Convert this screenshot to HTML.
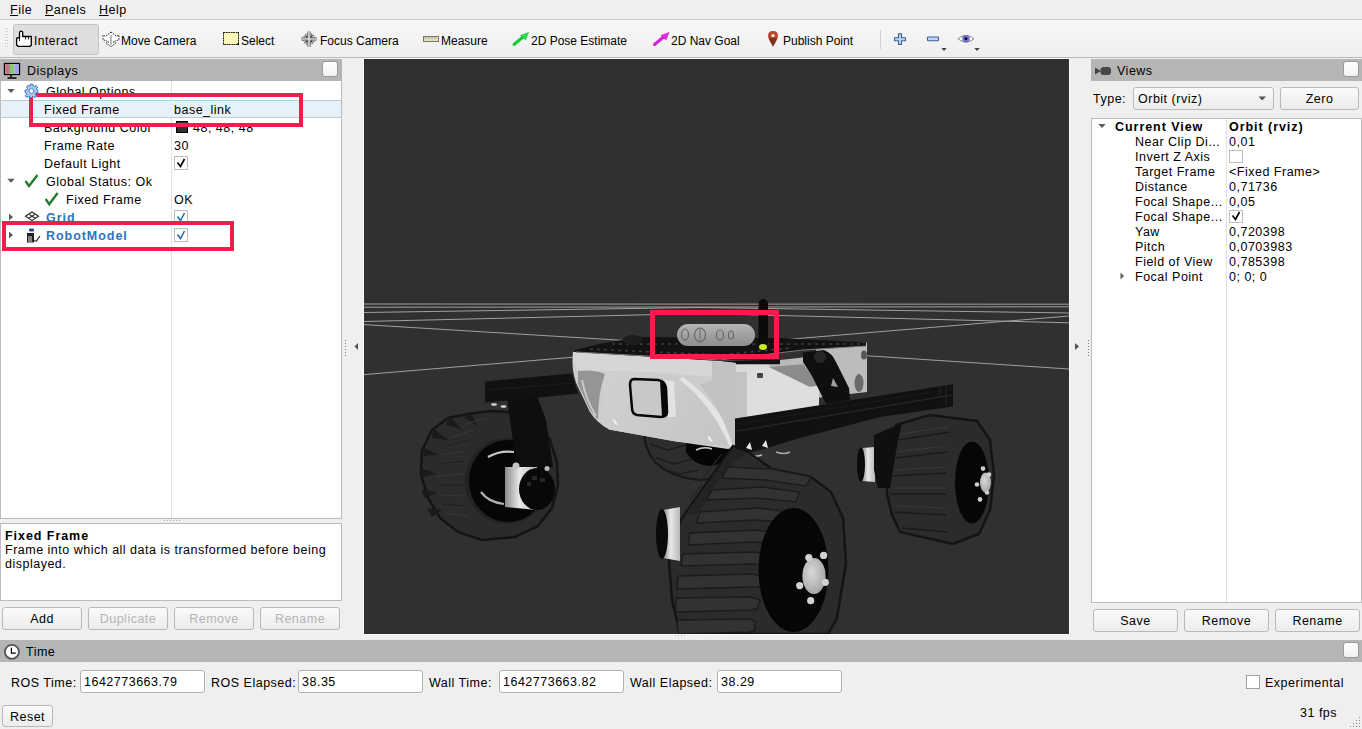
<!DOCTYPE html>
<html><head><meta charset="utf-8">
<style>
*{box-sizing:border-box;margin:0;padding:0}
html,body{width:1362px;height:729px;overflow:hidden;background:#efefef}
body{position:relative;font-family:"Liberation Sans",sans-serif;font-size:12.5px;letter-spacing:0.5px;color:#000}
.a{position:absolute}
.t{position:absolute;white-space:nowrap;line-height:15px;padding-top:1px}
.btn{position:absolute;border:1px solid #b9b9b9;border-radius:3px;background:linear-gradient(#fafafa,#ececec);text-align:center;line-height:21px;padding-top:1px}
.dis{color:#b4b4b4}
.hdr{position:absolute;background:#b5b5b5;height:22px}
.cb{position:absolute;width:16px;height:16px;border:1px solid #9a9a9a;border-radius:3px;background:linear-gradient(#ffffff,#f2f2f2)}
.tick{position:absolute;width:14px;height:14px;border:1px solid #bdbdbd;background:#fff}
.red{position:absolute;border:4.5px solid #f01e4a}
.inp{position:absolute;background:#fff;border:1px solid #b0b0b0;border-radius:3px;height:23px;line-height:22px;padding-left:3px}
b{font-weight:bold;letter-spacing:0.95px}
.tb{font-size:12px;letter-spacing:0}
</style></head><body>

<!-- menu bar -->
<div class="t" style="left:10px;top:2px"><u>F</u>ile</div>
<div class="t" style="left:45px;top:2px"><u>P</u>anels</div>
<div class="t" style="left:99px;top:2px"><u>H</u>elp</div>
<div class="a" style="left:0;top:19px;width:1362px;height:1px;background:#c9c9c9"></div>

<!-- toolbar -->
<div class="a" style="left:0;top:20px;width:1362px;height:37px;background:linear-gradient(#f7f7f7,#efefef)"></div>
<div class="a" style="left:0;top:57px;width:1362px;height:1px;background:#bababa"></div>
<div class="a" style="left:13px;top:24px;width:86px;height:31px;border:1px solid #c4c4c4;border-radius:3px;background:#dedede"></div>
<div class="t tb" style="left:34px;top:33px;letter-spacing:0.5px">Interact</div>
<div class="t tb" style="left:121px;top:33px">Move Camera</div>
<div class="a" style="left:223px;top:32px;width:16px;height:13px;border:1px dashed #222;background:#fafac0"></div>
<div class="t tb" style="left:241px;top:33px">Select</div>
<div class="t tb" style="left:320px;top:33px">Focus Camera</div>
<div class="a" style="left:423px;top:36px;width:16px;height:6px;border:1px solid #777;background:#e6e2b8"></div>
<div class="t tb" style="left:441px;top:33px">Measure</div>
<div class="t tb" style="left:531px;top:33px">2D Pose Estimate</div>
<div class="t tb" style="left:671px;top:33px">2D Nav Goal</div>
<div class="t tb" style="left:783px;top:33px">Publish Point</div>
<div class="a" style="left:880px;top:30px;width:1px;height:19px;background:#d0d0d0"></div>

<!-- Displays panel -->
<div class="hdr" style="left:0;top:59px;width:342px"></div>
<div class="t" style="left:27px;top:63px">Displays</div>
<div class="cb" style="left:322px;top:61px"></div>
<div class="a" style="left:0;top:81px;width:342px;height:438px;background:#fff;border:1px solid #bcbcbc;border-top:none"></div>
<div class="a" style="left:171px;top:81px;width:1px;height:437px;background:#e2e2e2"></div>
<div class="a" style="left:1px;top:100px;width:340px;height:18px;background:#e6f1fa;border-top:1px solid #b9cdd9;border-bottom:1px solid #b9cdd9"></div>

<div class="t" style="left:46px;top:84px">Global Options</div>
<div class="t" style="left:44px;top:102px">Fixed Frame</div>
<div class="t" style="left:174px;top:102px">base_link</div>
<div class="t" style="left:44px;top:120px">Background Color</div>
<div class="a" style="left:176px;top:121px;width:12px;height:12px;background:#303030;border:1px solid #000"></div>
<div class="t" style="left:193px;top:120px">48; 48; 48</div>
<div class="t" style="left:44px;top:138px">Frame Rate</div>
<div class="t" style="left:174px;top:138px">30</div>
<div class="t" style="left:44px;top:156px">Default Light</div>
<div class="tick" style="left:174px;top:156px"></div>
<div class="t" style="left:46px;top:174px">Global Status: Ok</div>
<div class="t" style="left:66px;top:192px">Fixed Frame</div>
<div class="t" style="left:174px;top:192px">OK</div>
<div class="t" style="left:46px;top:210px;color:#2f73bd"><b>Grid</b></div>
<div class="tick" style="left:174px;top:210px"></div>
<div class="t" style="left:46px;top:228px;color:#2f73bd"><b>RobotModel</b></div>
<div class="tick" style="left:174px;top:228px"></div>

<div class="red" style="left:29px;top:93px;width:274px;height:34px"></div>
<div class="red" style="left:2px;top:221px;width:232px;height:30px"></div>

<!-- description -->
<div class="a" style="left:0;top:523px;width:342px;height:78px;background:#fff;border:1px solid #bcbcbc"></div>
<div class="t" style="left:5px;top:528px"><b>Fixed Frame</b></div>
<div class="t" style="left:5px;top:542px">Frame into which all data is transformed before being</div>
<div class="t" style="left:5px;top:556px">displayed.</div>

<div class="btn" style="left:2px;top:607px;width:80px;height:23px">Add</div>
<div class="btn dis" style="left:88px;top:607px;width:80px;height:23px">Duplicate</div>
<div class="btn dis" style="left:174px;top:607px;width:80px;height:23px">Remove</div>
<div class="btn dis" style="left:260px;top:607px;width:80px;height:23px">Rename</div>

<!-- 3D view -->
<div class="a" style="left:363px;top:58px;width:707px;height:577px;background:#fbfbfb"></div>
<div class="a" style="left:364px;top:59px;width:705px;height:575px;background:#303030;overflow:hidden">
<svg id="scene" width="705" height="575" viewBox="364 59 705 575">
<defs>
<linearGradient id="mot" x1="0" y1="0" x2="1" y2="0"><stop offset="0" stop-color="#8a8a8a"/><stop offset="0.45" stop-color="#e8e8e8"/><stop offset="1" stop-color="#b8b8b8"/></linearGradient>
<linearGradient id="motv" x1="0" y1="0" x2="0" y2="1"><stop offset="0" stop-color="#9a9a9a"/><stop offset="0.45" stop-color="#e6e6e6"/><stop offset="1" stop-color="#a8a8a8"/></linearGradient>
<linearGradient id="face" x1="0" y1="0" x2="1" y2="0.3"><stop offset="0" stop-color="#d0d0d0"/><stop offset="1" stop-color="#c6c6c6"/></linearGradient>
<linearGradient id="cam" x1="0" y1="0" x2="0" y2="1"><stop offset="0" stop-color="#b5b5b5"/><stop offset="1" stop-color="#8d8d8d"/></linearGradient>
<radialGradient id="cap" cx="0.4" cy="0.4" r="0.7"><stop offset="0" stop-color="#d8d8d8"/><stop offset="1" stop-color="#a0a0a0"/></radialGradient>
</defs>
<g stroke="#a0a0a0" stroke-width="1" fill="none">
<path d="M364 304 L1069 304.2"/>
<path d="M364 307.2 L1069 306.8"/>
<path d="M364 312.5 L700 307.5 L1069 313"/>
<path d="M364 321.5 L700 313.5 L1069 322.8"/>
<path d="M364 324.6 L650 342"/>
<path d="M364 374.6 L1069 316"/>
<path d="M840 354 L1069 369"/>
</g>

<!-- rear center wheel (behind body) -->
<path d="M644 432 L700 430 L740 440 L738 470 Q725 478 700 480 Q672 478 655 462 Q644 448 644 432Z" fill="#2d2d2d" stroke="#161616" stroke-width="2"/>
<g stroke="#1c1c1c" stroke-width="1.4" fill="none"><path d="M650 444 l18 6 l22 -6 M656 458 l18 6 l22 -6 M666 470 l14 4 l18 -4"/></g>
<path d="M686 440 L735 442 Q730 462 712 466 Q694 466 686 452Z" fill="#050505"/>
<path d="M696 450 Q704 446 712 449" stroke="#d0d0d0" stroke-width="1.5" fill="none"/>
<!-- left rear wheel -->
<path d="M468 414 L490 411 L512 412 L535 420 L550 440 L557 462 L558 485 L552 508 L538 526 L515 537 L482 540 L458 532 L440 518 L428 498 L421 474 L422 450 L432 430 L448 418Z" fill="#2b2b2b" stroke="#141414" stroke-width="2.5"/>
<g fill="#1a1a1a">
<path d="M423 447 L438 455 L424 456Z"/><path d="M421 468 L437 474 L421 477Z"/><path d="M422 489 L438 493 L424 498Z"/><path d="M427 508 L442 510 L432 517Z"/><path d="M433 428 L448 440 L432 438Z"/><path d="M450 416 L462 430 L446 424Z"/><path d="M470 412 L478 426 L464 418Z"/>
</g>
<g stroke="#383838" stroke-width="1.2" fill="none"><path d="M440 455 l24 -4 M438 476 l26 -2 M440 495 l26 1 M446 513 l22 3 M450 438 l24 -8 M466 424 l20 -6"/></g>
<g stroke="#1f1f1f" stroke-width="1.2" fill="none"><path d="M438 464 l26 -3 M438 485 l26 0 M442 504 l24 2 M446 446 l24 -6"/></g>
<ellipse cx="507" cy="481" rx="42" ry="43" fill="#222"/>
<ellipse cx="508" cy="481" rx="39" ry="41" fill="#060606"/>
<path d="M488 457 Q500 450 514 452" stroke="#c9c9c9" stroke-width="2.2" fill="none"/>
<path d="M481 492 Q488 502 504 504" stroke="#b0b0b0" stroke-width="2.2" fill="none"/>
<!-- left leg -->
<path d="M507 398 L537 396 L546 420 L553 467 L517 470 L510 420Z" fill="#0e0e0e"/>
<!-- left motor -->
<path d="M505 467 L537 467 L537 510 L505 507Z" fill="url(#mot)"/>
<ellipse cx="537" cy="489" rx="18" ry="21" fill="#080808"/>
<g fill="#262626"><rect x="532" y="476" width="5" height="4"/><rect x="540" y="478" width="5" height="4"/><rect x="527" y="482" width="4" height="4"/></g>
<circle cx="516" cy="466" r="3.5" fill="#c4c4c4"/>
<circle cx="547" cy="468.5" r="2.5" fill="#bbbbbb"/>
<!-- left rail -->
<path d="M485 381.5 L572 373.4 L578 393.4 L537 397.7 L485 402.5Z" fill="#111"/>
<path d="M486 390 L575 383" stroke="#1c1c1c" stroke-width="1.2"/>
<g fill="#d8d8d8"><ellipse cx="494" cy="404.5" rx="3" ry="1.3"/><ellipse cx="503.5" cy="406.5" rx="3" ry="1.3"/></g>

<!-- right rear wheel -->
<path d="M896 425 L930 415 L977 421 L990 440 L994 475 L990 510 L979 534 L953 544 L900 532 L892 515 L887 494 L886 460Z" fill="#2b2b2b" stroke="#141414" stroke-width="2.5"/>
<g stroke="#1a1a1a" stroke-width="1.6" fill="none">
<path d="M898 440 l52 -8 M894 458 l54 -6 M890 476 l56 -3 M890 494 l56 0 M894 512 l52 3 M902 528 l46 4"/>
</g>
<g stroke="#3a3a3a" stroke-width="1.2" fill="none">
<path d="M900 434 l48 -7 M896 452 l50 -6 M892 470 l54 -3 M892 488 l54 0 M896 506 l50 2"/>
</g>
<ellipse cx="972" cy="482.5" rx="17" ry="41" fill="#060606"/>
<ellipse cx="985.5" cy="482.5" rx="5.5" ry="10" fill="url(#cap)"/>
<g fill="#cfcfcf"><circle cx="983" cy="468.6" r="2.3"/><circle cx="989" cy="474.6" r="2.3"/><circle cx="977" cy="484.5" r="2.3"/><circle cx="987" cy="492.5" r="2.3"/><circle cx="980" cy="499.4" r="2.3"/></g>
<!-- right motor & bracket -->
<path d="M862 448 L875 447 L875 482 L862 481Z" fill="url(#mot)"/>
<ellipse cx="861" cy="464.5" rx="4" ry="17" fill="#0a0a0a"/>
<path d="M874 435 L902 423 L898 440 L890 488 L878 488 L874 470Z" fill="#0f0f0f"/>

<!-- right side box -->
<path d="M816 344.5 L867 342.5 L867 392 L816 398Z" fill="#bcbcbc"/>
<ellipse cx="864" cy="355" rx="3" ry="4.5" fill="#585858"/>
<ellipse cx="859" cy="383" rx="4.5" ry="9" fill="#6a6a6a"/>

<!-- body side/white parts -->
<path d="M700 361 L780 360 L816 356 L820 396 L760 420 L735 432 L700 430Z" fill="#b9b9b9"/>
<path d="M700 360 L768 360 L770 372 L722 372 L700 372Z" fill="#d9d9d9"/>
<path d="M721 372 L747 372 L747 440 L721 440Z" fill="#c3c3c3"/>
<path d="M747 372 L769 367 L810 387 L819 385 L819 412 L747 428Z" fill="#dedede"/>
<path d="M769 367 L803 364.3 L820 385.5 L809.6 386.8Z" fill="#8c8c8c"/>
<path d="M700 360.4 L780 360 L780 364.3 L700 364.3Z" fill="#101010"/>
<rect x="757" y="373" width="6" height="5" rx="1" fill="#444"/>

<!-- body front -->
<path d="M573 352 L720 361 L721 372 L735 372 L737 447 L728 449 L676 441.6 L609 429.5 Q596 422 589.6 411.4 L576 382.7 Q571 368 573 352Z" fill="#cdcdcd"/>
<path d="M573 352 L720 361 L736 363 L736 378 L700 376 Q650 371 600 371 L578 371 Q572 362 573 352Z" fill="#d6d6d6"/>
<path d="M578 371 Q594 369 605 374 Q598 392 598 420 L590 410 L578 384Z" fill="#959595"/>
<path d="M582 380 Q586 400 596 416" stroke="#c8c8c8" stroke-width="2" fill="none"/>
<path d="M605 374 Q650 371 682 377 Q718 400 737 447 L676 441.6 L609 429.5 Q600 410 605 374Z" fill="url(#face)"/>
<path d="M682 377 Q718 400 737 447 L730 447 Q712 405 680 380Z" fill="#e4e4e4"/>
<path d="M712 361 L736 363 L736 447 L733 447 Q722 410 700 385 L712 380Z" fill="#c2c2c2"/>
<path d="M662 380 L674 381 L676 417 L664 417Z" fill="#e2e2e2"/>
<path d="M634 379 L658 380 Q665 381 666 388 L667 412 Q667 417 661 417 L637 415 Q632 414 632 408 L630 385 Q630 379 634 379Z" fill="#c8c8c8" stroke="#080808" stroke-width="2.5"/>
<path d="M660 381 L666 386 L668 414 L662 417Z" fill="#080808"/>
<path d="M612 419 l3 1 l3 5 l-3 -1Z" fill="#f2f2f2"/>
<path d="M707 436 l3 1 l3 5 l-3 -1Z" fill="#f2f2f2"/>
<!-- top plate -->
<path d="M575 350 L600 344 L622 340 L640 337 L780 338 L866 342.5 L866 346 L803 350 L720 361 L575 352Z" fill="#121212"/>
<path d="M576 352 L720 360 L803 350 L866 346" stroke="#7a7a7a" stroke-width="1" fill="none"/>
<g stroke="#3c3c3c" stroke-width="1.6" fill="none" stroke-dasharray="3 4">
<path d="M590 349 L720 355 L790 348"/>
<path d="M612 344 L740 344 L860 344"/>
</g>
<ellipse cx="633" cy="340" rx="10" ry="5" fill="#1d1d1d"/>
<!-- camera -->
<rect x="677" y="324" width="78" height="22" rx="11" fill="url(#cam)"/>
<g fill="none" stroke="#686868" stroke-width="1.2"><ellipse cx="685" cy="334.5" rx="3.5" ry="5.5"/><ellipse cx="700" cy="335" rx="5.5" ry="7"/><ellipse cx="720" cy="335" rx="3.5" ry="5"/><ellipse cx="731" cy="335" rx="2.5" ry="4"/></g>
<path d="M700 328 V342" stroke="#686868" stroke-width="1"/>
<!-- antenna -->
<rect x="758.5" y="299" width="9.5" height="48" rx="4.7" fill="#0b0b0b"/>
<ellipse cx="763" cy="347" rx="4" ry="3" fill="#c8ea2a"/>
<!-- right arm -->
<path d="M803 352.5 L824 350 Q832 353 836 362 L849 388 L850 400 L826 404 L812 376 L803 362Z" fill="#0f0f0f"/>
<circle cx="820" cy="357" r="6" fill="#262626"/>
<path d="M833 378 l5 9 l-7 -1Z" fill="#a0a0a0"/>

<!-- front rail -->
<path d="M735 418.5 L953 384.3 L953 406.5 L880 417 L800 438 L760 450 L735 456Z" fill="#111"/>
<path d="M737 431 L952 395" stroke="#232323" stroke-width="1.6"/>
<path d="M737 424 L952 389" stroke="#1a1a1a" stroke-width="1"/>
<path d="M946 386 V406 M940 387 V396" stroke="#262626" stroke-width="1"/>
<g fill="#e6e6e6"><path d="M746 448 l4 -6 l2 8Z"/><path d="M762 446 l4 -6 l2 8Z"/></g>
<path d="M744 454 Q752 458 762 455" stroke="#bdbdbd" stroke-width="1.8" fill="none"/>
<path d="M776 452 Q784 455 790 452" stroke="#a8a8a8" stroke-width="1.5" fill="none"/>

<!-- front big wheel -->
<path d="M682 518 L733 446 L748 452 L772 469 L811 477 L831 492 L843 518 L846 563.6 L836.8 618.5 L828 634 L680 634 L672 600 L669 563.6 L674 535Z" fill="#2b2b2b" stroke="#141414" stroke-width="2.5"/>
<path d="M684 516 L733 448 L747 453 L728 467 L712 490 L700 512Z" fill="#232323"/>
<g fill="#323232" stroke="#1c1c1c" stroke-width="1.5">
<path d="M728 467 L772 469 L811 477 L806 486 L766 480 L722 478Z"/>
<path d="M712 490 L762 487 L800 492 L796 502 L758 498 L706 500Z"/>
<path d="M700 512 L758 508 L790 512 L786 522 L754 520 L696 523Z"/>
<path d="M690 533 L756 530 L780 533 L776 543 L752 542 L688 545Z"/>
<path d="M683 554 L754 552 L772 555 L768 565 L752 564 L681 566Z"/>
<path d="M678 576 L752 574 L766 577 L762 587 L751 587 L677 589Z"/>
<path d="M676 598 L751 597 L760 600 L757 609 L750 610 L676 612Z"/>
<path d="M677 620 L750 619 L756 622 L754 631 L749 632 L678 634Z"/>
</g>
<g stroke="#222" stroke-width="1.2" fill="none"><path d="M690 500 l12 -16 M700 482 l12 -16 M712 466 l10 -12"/></g>
<ellipse cx="793.5" cy="570" rx="35" ry="62" fill="#060606"/>
<ellipse cx="814" cy="576" rx="11.6" ry="18" fill="url(#cap)"/>
<g fill="#d2d2d2"><circle cx="808.8" cy="557.6" r="3.6"/><circle cx="823.6" cy="555.4" r="3.6"/><circle cx="799.7" cy="585.6" r="3.6"/><circle cx="825.3" cy="582.3" r="3.6"/><circle cx="810.7" cy="600.7" r="3.6"/></g>
<!-- front motor -->
<path d="M663 510 L680 507 L680 561 L663 558Z" fill="url(#mot)"/>
<ellipse cx="662" cy="534" rx="6" ry="25" fill="#0a0a0a"/>
</svg>
</div>

<div class="red" style="left:650px;top:310px;width:129px;height:49px;border-width:5px"></div>
<!-- Views panel -->
<div class="hdr" style="left:1091px;top:59px;width:271px"></div>
<div class="t" style="left:1117px;top:63px">Views</div>
<div class="cb" style="left:1343px;top:61px"></div>
<div class="t" style="left:1093px;top:91px">Type:</div>
<div class="btn" style="left:1133px;top:87px;width:141px;height:23px;text-align:left;padding-left:4px">Orbit (rviz)</div>
<div class="btn" style="left:1280px;top:87px;width:79px;height:23px">Zero</div>
<div class="a" style="left:1091px;top:118px;width:271px;height:485px;background:#fff;border:1px solid #bcbcbc"></div>
<div class="a" style="left:1226px;top:119px;width:1px;height:483px;background:#e2e2e2"></div>
<div class="t" style="left:1115px;top:119px"><b>Current View</b></div>
<div class="t" style="left:1229px;top:119px"><b>Orbit (rviz)</b></div>
<div class="t" style="left:1135px;top:134px">Near Clip Di...</div><div class="t" style="left:1229px;top:134px">0,01</div>
<div class="t" style="left:1135px;top:149px">Invert Z Axis</div><div class="tick" style="left:1229px;top:150px;width:14px;height:13px"></div>
<div class="t" style="left:1135px;top:164px">Target Frame</div><div class="t" style="left:1229px;top:164px">&lt;Fixed Frame&gt;</div>
<div class="t" style="left:1135px;top:179px">Distance</div><div class="t" style="left:1229px;top:179px">0,71736</div>
<div class="t" style="left:1135px;top:194px">Focal Shape...</div><div class="t" style="left:1229px;top:194px">0,05</div>
<div class="t" style="left:1135px;top:209px">Focal Shape...</div><div class="tick" style="left:1229px;top:210px;width:14px;height:13px"></div>
<div class="t" style="left:1135px;top:224px">Yaw</div><div class="t" style="left:1229px;top:224px">0,720398</div>
<div class="t" style="left:1135px;top:239px">Pitch</div><div class="t" style="left:1229px;top:239px">0,0703983</div>
<div class="t" style="left:1135px;top:254px">Field of View</div><div class="t" style="left:1229px;top:254px">0,785398</div>
<div class="t" style="left:1135px;top:269px">Focal Point</div><div class="t" style="left:1229px;top:269px">0; 0; 0</div>

<div class="btn" style="left:1093px;top:609px;width:85px;height:23px">Save</div>
<div class="btn" style="left:1184px;top:609px;width:85px;height:23px">Remove</div>
<div class="btn" style="left:1275px;top:609px;width:85px;height:23px">Rename</div>

<!-- Time panel -->
<div class="hdr" style="left:0;top:640px;width:1362px"></div>
<div class="t" style="left:26px;top:644px">Time</div>
<div class="cb" style="left:1343px;top:642px"></div>
<div class="t" style="left:11px;top:675px">ROS Time:</div>
<div class="inp" style="left:80px;top:670px;width:125px">1642773663.79</div>
<div class="t" style="left:211px;top:675px">ROS Elapsed:</div>
<div class="inp" style="left:298px;top:670px;width:125px">38.35</div>
<div class="t" style="left:429px;top:675px">Wall Time:</div>
<div class="inp" style="left:499px;top:670px;width:125px">1642773663.82</div>
<div class="t" style="left:630px;top:675px">Wall Elapsed:</div>
<div class="inp" style="left:717px;top:670px;width:125px">38.29</div>
<div class="tick" style="left:1246px;top:675px;width:14px;height:14px;border-color:#a0a0a0"></div>
<div class="t" style="left:1265px;top:675px">Experimental</div>
<div class="btn" style="left:2px;top:705px;width:51px;height:22px">Reset</div>
<div class="t" style="left:1300px;top:705px">31 fps</div>


<!-- ICONS -->
<svg class="a" style="left:0;top:0" width="1362" height="729" viewBox="0 0 1362 729">
<!-- toolbar handle dots -->
<g fill="#c4c4c4"><rect x="5" y="28" width="1" height="1"/><rect x="7" y="28" width="1" height="1"/><rect x="5" y="31" width="1" height="1"/><rect x="7" y="31" width="1" height="1"/><rect x="5" y="34" width="1" height="1"/><rect x="7" y="34" width="1" height="1"/><rect x="5" y="37" width="1" height="1"/><rect x="7" y="37" width="1" height="1"/><rect x="5" y="40" width="1" height="1"/><rect x="7" y="40" width="1" height="1"/><rect x="5" y="43" width="1" height="1"/><rect x="7" y="43" width="1" height="1"/><rect x="5" y="46" width="1" height="1"/><rect x="7" y="46" width="1" height="1"/></g>
<!-- hand -->
<path d="M19.5 37.5 V32.6 Q19.5 31.2 21.1 31.2 Q22.7 31.2 22.7 32.6 V36.5 H31.3 V45 L30.2 46.3 H18 L16.6 45 V38.2 Z" fill="#fff" stroke="#000" stroke-width="1.3" stroke-linejoin="round"/>
<path d="M25.6 36.8 V39.5 M28.5 36.8 V39.5 M19.5 37.5 V41" stroke="#000" stroke-width="0.9"/>
<!-- move camera -->
<path d="M111 32 L116.5 36.3 L119 35.2 V39.8 L115.5 40.8 L113.2 42.2 L115.8 43 L111 46.8 L106.2 43 L108.8 42.2 L106.5 40.8 L103 39.8 V35.2 L105.5 36.3 Z" fill="#fff" stroke="#333" stroke-width="1" stroke-dasharray="1.6 0.9"/>
<path d="M111 35 V45" stroke="#bbb" stroke-width="2"/>
<!-- select -->
<rect x="223.5" y="32.5" width="15" height="12" fill="#fbf8b8" stroke="#222" stroke-width="1" stroke-dasharray="1.5 1"/>
<path d="M236 45 L239 42 V45Z" fill="#000"/>
<!-- focus camera -->
<circle cx="309" cy="39" r="5.5" fill="none" stroke="#666" stroke-width="1.3" stroke-dasharray="1.3 0.8"/>
<path d="M309 31.5 V47 M301 39 H317" stroke="#666" stroke-width="3.2"/>
<path d="M309 31.5 V47 M301 39 H317" stroke="#fff" stroke-width="1.2"/>
<g fill="#333"><rect x="305.5" y="35.5" width="2" height="2"/><rect x="310.5" y="35.5" width="2" height="2"/><rect x="305.5" y="40.5" width="2" height="2"/><rect x="310.5" y="40.5" width="2" height="2"/></g>
<!-- measure -->
<rect x="423.5" y="36.5" width="15" height="5" fill="#e4e0b4" stroke="#777" stroke-width="1"/>
<path d="M426 37 V39 M429 37 V39 M432 37 V39 M435 37 V39" stroke="#888" stroke-width="0.7"/>
<!-- 2d pose -->
<path d="M514 44.5 L523 37" stroke="#1ec43c" stroke-width="3" stroke-linecap="round"/>
<path d="M528.5 32.5 L525.5 40 L520.5 35.5 Z" fill="#1ee84a" stroke="#19b83a" stroke-width="0.6"/>
<!-- 2d nav -->
<path d="M654.5 44.5 L663.5 37" stroke="#d81ed8" stroke-width="3" stroke-linecap="round"/>
<path d="M669 32.5 L666 40 L661 35.5 Z" fill="#ee2aee" stroke="#c018c0" stroke-width="0.6"/>
<!-- pin -->
<path d="M773 46.5 Q768 39 768 36 Q768 31 773 31 Q778 31 778 36 Q778 39 773 46.5Z" fill="#b9482a"/>
<path d="M773 46.5 Q770 41 769 38 L777 38 Q776 41 773 46.5Z" fill="#7a3418"/>
<circle cx="773" cy="35.5" r="1.6" fill="#fff"/>
<!-- plus / minus -->
<path d="M898.5 33.8 H901.5 V37.8 H905.5 V40.8 H901.5 V44.5 H898.5 V40.8 H894.5 V37.8 H898.5Z" fill="#bcd6f3" stroke="#3c6290" stroke-width="1.1" stroke-linejoin="round"/>
<rect x="927.5" y="37" width="11" height="3.8" rx="0.8" fill="#bcd6f3" stroke="#3c6290" stroke-width="1.1"/>
<path d="M941.3 48 H946.8 L944 51Z M974.3 48 H979.8 L977 51Z" fill="#444"/>
<!-- eye -->
<path d="M958 38.8 Q966 32 974 38.8 Q966 45.5 958 38.8Z" fill="#fff" stroke="#888" stroke-width="1"/>
<circle cx="966" cy="38.7" r="3.8" fill="#6f70c8"/>
<circle cx="966" cy="38.7" r="1.4" fill="#000"/>

<!-- Displays monitor -->
<rect x="4.5" y="63.5" width="15" height="11" fill="#fff" stroke="#000" stroke-width="1.3"/>
<rect x="5.3" y="64.2" width="4.6" height="9.6" fill="#c96e7b"/><rect x="9.9" y="64.2" width="4.6" height="9.6" fill="#7ccb7a"/><rect x="14.5" y="64.2" width="4.4" height="9.6" fill="#9f9fe8"/>
<path d="M11 75 V77 M7.5 78 H16.5" stroke="#000" stroke-width="1.6"/>
<!-- tree arrows -->
<path d="M7.3 89 H14.7 L11 93Z" fill="#5a5a5a"/>
<path d="M7.3 178.7 H14.7 L11 182.7Z" fill="#5a5a5a"/>
<path d="M9 213.5 L13 217 L9 220.5Z" fill="#5a5a5a"/>
<path d="M9 231.5 L13 235 L9 238.5Z" fill="#5a5a5a"/>
<!-- gear -->
<g transform="translate(31.5 90.5)">
<path d="M-1.3 -6.3 H1.3 L1.6 -4.5 L3.2 -3.8 L4.6 -5 L6.3 -3.3 L5 -1.9 L5.6 -0.4 L6.4 0 V2.4 L4.6 2.6 L3.9 4.2 L5 5.6 L3.3 7.3 L1.9 6 L0.4 6.6 L0 7 H-1.8 L-1.6 6.6 L-3.2 5.9 L-4.6 7 L-6.3 5.3 L-5 3.9 L-5.7 2.3 L-6.4 2 V-0.4 L-4.6 -0.6 L-3.9 -2.2 L-5 -3.6 L-3.3 -5.3 L-1.9 -4 L-1.5 -4.3Z" fill="#a9c6ee" stroke="#3a6fc0" stroke-width="1"/>
<circle cx="0" cy="0.6" r="2.4" fill="#fff" stroke="#3a6fc0" stroke-width="0.8"/>
</g>
<!-- green checks -->
<path d="M25.5 181 L29 186 L37.5 175" fill="none" stroke="#1f7a2c" stroke-width="2.3"/>
<path d="M45.7 199 L49.2 204.3 L57.6 193" fill="none" stroke="#1f7a2c" stroke-width="2.3"/>
<!-- grid icon -->
<path d="M32 212 L38.5 216.2 L32 220.4 L25.5 216.2Z M28.8 214.1 L35.2 218.3 M35.2 214.1 L28.8 218.3" fill="none" stroke="#222" stroke-width="1.1"/>
<!-- robot icon -->
<rect x="29" y="228.5" width="5" height="3" rx="1.2" fill="#3a3a9a"/>
<path d="M27 233 H34 V242.5 H27Z" fill="#222"/>
<path d="M25.5 235 V242.5 M29 236 V242 M31 236 V242" stroke="#fff" stroke-width="0.9"/>
<path d="M34 240 Q36 242.5 37.5 239.5 L40 236" fill="none" stroke="#222" stroke-width="1.2"/>
<!-- checkbox ticks -->
<path d="M177.5 162.5 L180.5 166.5 L184.5 159" fill="none" stroke="#000" stroke-width="1.7"/>
<path d="M177.5 216.5 L180.5 220.5 L184.5 213" fill="none" stroke="#2a62b0" stroke-width="1.5"/>
<path d="M177.5 234.5 L180.5 238.5 L184.5 231" fill="none" stroke="#2a62b0" stroke-width="1.5"/>
<path d="M1232.5 215.5 L1235.5 219.5 L1239.5 212" fill="none" stroke="#000" stroke-width="1.7"/>
<!-- views camera -->
<path d="M1095 67.5 L1101 71 L1095 74.5Z" fill="#474747"/>
<rect x="1100.5" y="67" width="10.5" height="8" rx="3" fill="#474747"/>
<!-- views tree arrows -->
<path d="M1098.3 124 H1105.7 L1102 128Z" fill="#5a5a5a"/>
<path d="M1120.5 272.5 L1124 276 L1120.5 279.5Z" fill="#5a5a5a"/>
<!-- combo arrow -->
<path d="M1258.5 96.5 H1266 L1262.2 100.5Z" fill="#555"/>
<!-- clock -->
<circle cx="11.9" cy="651.8" r="7" fill="#fff" stroke="#555" stroke-width="1.8"/>
<path d="M11.4 647.8 V653.2 H15.8" fill="none" stroke="#000" stroke-width="1.2"/>
<!-- splitter dots -->
<g fill="#b0b0b0"><rect x="164" y="520" width="1" height="1"/><rect x="167" y="520" width="1" height="1"/><rect x="170" y="520" width="1" height="1"/><rect x="173" y="520" width="1" height="1"/><rect x="176" y="520" width="1" height="1"/><rect x="179" y="520" width="1" height="1"/>
<rect x="675" y="635" width="1" height="1"/><rect x="678" y="635" width="1" height="1"/><rect x="681" y="635" width="1" height="1"/><rect x="684" y="635" width="1" height="1"/></g>
<!-- side arrows -->
<path d="M358 343 L354.5 346.5 L358 350Z" fill="#555"/>
<path d="M1075 343 L1079 346.5 L1075 350Z" fill="#555"/>
<g fill="#7a7a7a"><rect x="345" y="340" width="1" height="1"/><rect x="345" y="343" width="1" height="1"/><rect x="345" y="346" width="1" height="1"/><rect x="345" y="349" width="1" height="1"/><rect x="345" y="352" width="1" height="1"/><rect x="345" y="355" width="1" height="1"/><rect x="1088" y="340" width="1" height="1"/><rect x="1088" y="343" width="1" height="1"/><rect x="1088" y="346" width="1" height="1"/><rect x="1088" y="349" width="1" height="1"/><rect x="1088" y="352" width="1" height="1"/><rect x="1088" y="355" width="1" height="1"/></g>
<g fill="#8a8a8a"><rect x="1359" y="717" width="1" height="1"/><rect x="1356" y="720" width="1" height="1"/><rect x="1359" y="720" width="1" height="1"/><rect x="1353" y="723" width="1" height="1"/><rect x="1356" y="723" width="1" height="1"/><rect x="1359" y="723" width="1" height="1"/><rect x="1350" y="726" width="1" height="1"/><rect x="1353" y="726" width="1" height="1"/><rect x="1356" y="726" width="1" height="1"/><rect x="1359" y="726" width="1" height="1"/></g>
</svg>
</body></html>
